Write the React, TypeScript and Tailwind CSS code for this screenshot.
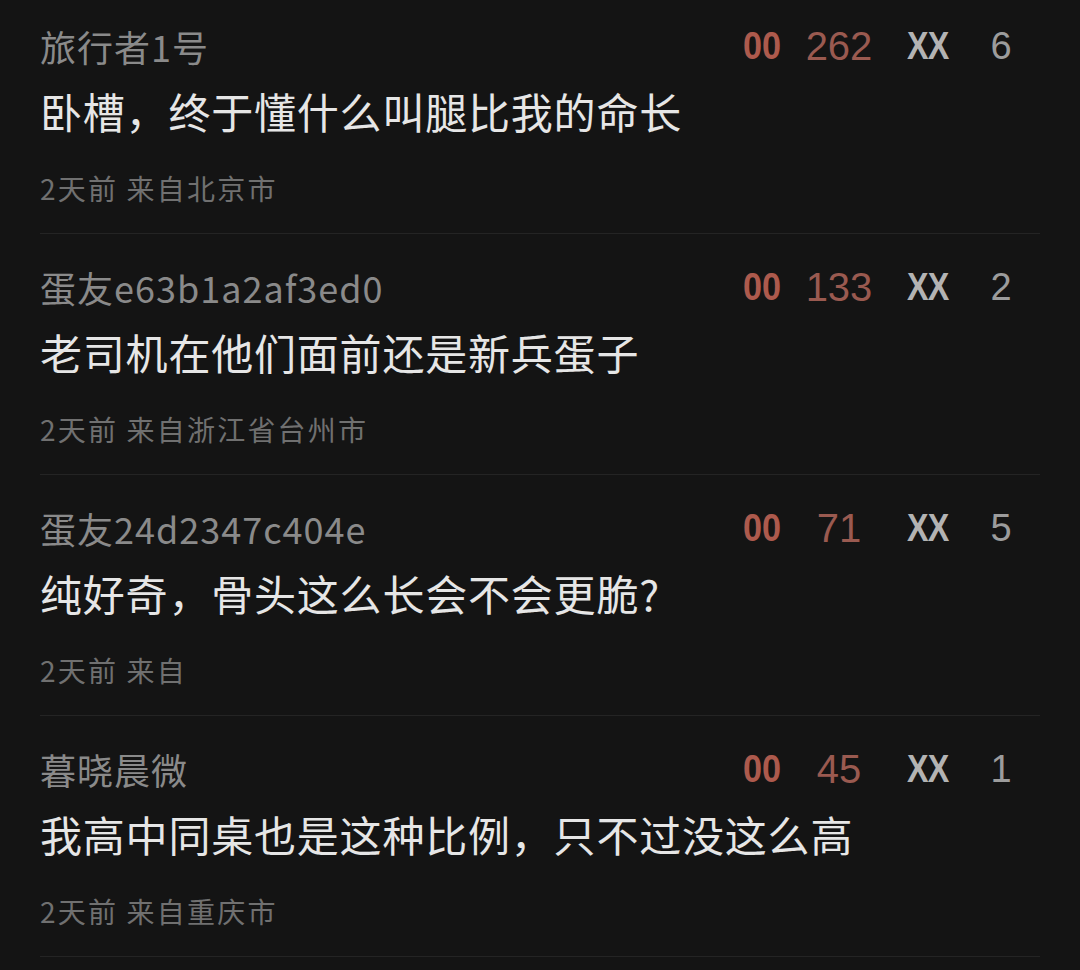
const comments = [
  { user: "旅行者1号", likes: 262, replies: 6, text: "卧槽，终于懂什么叫腿比我的命长", meta: "2天前 来自北京市" },
  { user: "蛋友e63b1a2af3ed0", likes: 133, replies: 2, text: "老司机在他们面前还是新兵蛋子", meta: "2天前 来自浙江省台州市" },
  { user: "蛋友24d2347c404e", likes: 71, replies: 5, text: "纯好奇，骨头这么长会不会更脆?", meta: "2天前 来自" },
  { user: "暮晓晨微", likes: 45, replies: 1, text: "我高中同桌也是这种比例，只不过没这么高", meta: "2天前 来自重庆市" },
];

export default function App() {
  return (
    <div
      className="w-[1080px] h-[970px] overflow-hidden bg-[#141414] px-[40px]"
      style={{ fontFamily: '"Noto Sans CJK SC", "Noto Sans", sans-serif' }}
    >
      {comments.map((c, i) => (
        <div
          key={i}
          className={`flex flex-col border-b border-[#242424] pb-[27px] ${i === 0 ? "pt-[24px]" : "pt-[31px]"}`}
        >
          <div className="flex h-[44px] items-center justify-between">
            <span className="text-[36px] leading-[44px] tracking-[1px] text-[#8a8a8a]">{c.user}</span>
            <div className="flex items-center" style={{ fontFamily: '"Liberation Sans", Arial, sans-serif' }}>
              <span className="w-[41px] origin-left scale-x-90 text-[38px] font-bold leading-[44px] tracking-[0px] text-[#ad5a4d]">00</span>
              <span className="ml-[5px] w-[100px] text-center text-[40px] leading-[44px] text-[#9a5a50]">{c.likes}</span>
              <span className="ml-[18px] w-[40px] origin-left scale-x-[0.85] text-[38px] font-bold leading-[44px] tracking-[-1px] text-[#b3b3b3]">XX</span>
              <span className="ml-[34px] w-[40px] text-center text-[38px] leading-[44px] text-[#9c9c9c]">{c.replies}</span>
              <span className="w-[19px]" />
            </div>
          </div>
          <div className="mt-[18px] h-[50px] text-[42px] leading-[50px] tracking-[0.8px] text-[#e6e6e6]">{c.text}</div>
          <div className="mt-[34px] h-[36px] text-[28px] leading-[36px] tracking-[2.2px] text-[#707070]">{c.meta}</div>
        </div>
      ))}
    </div>
  );
}
